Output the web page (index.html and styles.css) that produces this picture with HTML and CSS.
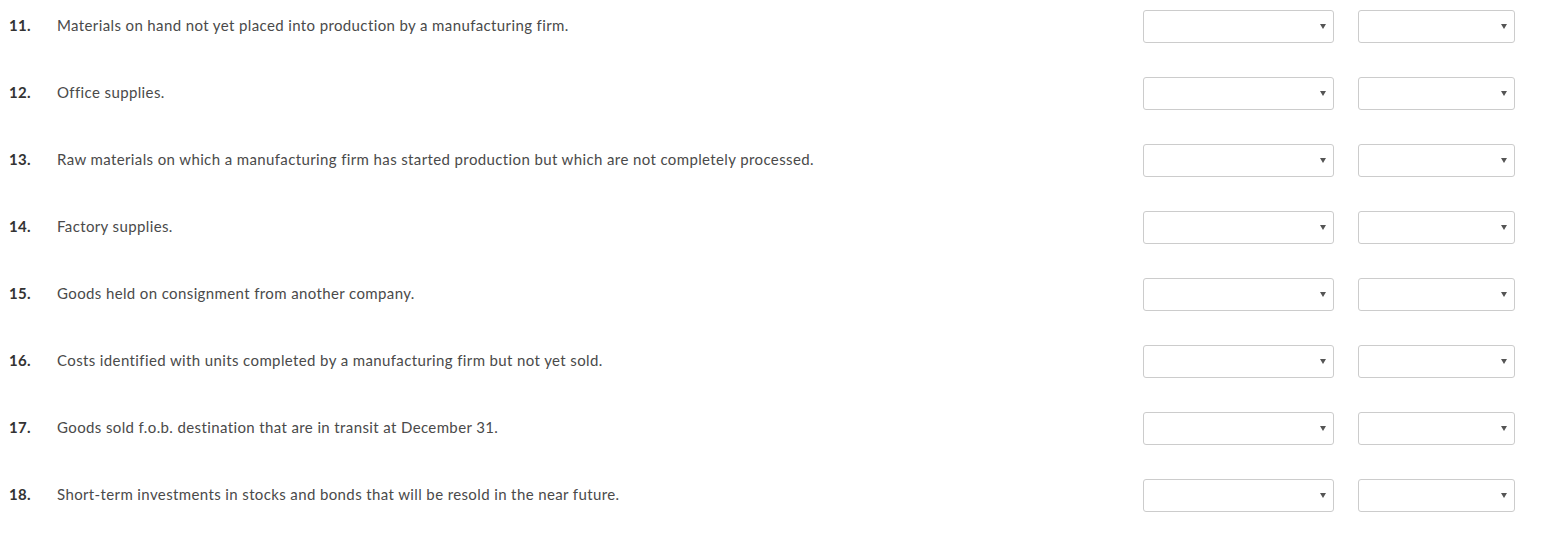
FILE: index.html
```html
<!DOCTYPE html>
<html>
<head>
<meta charset="utf-8">
<link rel="stylesheet" href="styles.css">
</head>
<body>
<div class="list">
  <div class="row"><span class="num">11.</span><span class="text">Materials on hand not yet placed into production by a manufacturing firm.</span><div class="sel wide"><i class="arrow"></i></div><div class="sel narrow"><i class="arrow"></i></div></div>
  <div class="row"><span class="num">12.</span><span class="text">Office supplies.</span><div class="sel wide"><i class="arrow"></i></div><div class="sel narrow"><i class="arrow"></i></div></div>
  <div class="row"><span class="num">13.</span><span class="text">Raw materials on which a manufacturing firm has started production but which are not completely processed.</span><div class="sel wide"><i class="arrow"></i></div><div class="sel narrow"><i class="arrow"></i></div></div>
  <div class="row"><span class="num">14.</span><span class="text">Factory supplies.</span><div class="sel wide"><i class="arrow"></i></div><div class="sel narrow"><i class="arrow"></i></div></div>
  <div class="row"><span class="num">15.</span><span class="text">Goods held on consignment from another company.</span><div class="sel wide"><i class="arrow"></i></div><div class="sel narrow"><i class="arrow"></i></div></div>
  <div class="row"><span class="num">16.</span><span class="text">Costs identified with units completed by a manufacturing firm but not yet sold.</span><div class="sel wide"><i class="arrow"></i></div><div class="sel narrow"><i class="arrow"></i></div></div>
  <div class="row"><span class="num">17.</span><span class="text">Goods sold f.o.b. destination that are in transit at December 31.</span><div class="sel wide"><i class="arrow"></i></div><div class="sel narrow"><i class="arrow"></i></div></div>
  <div class="row"><span class="num">18.</span><span class="text">Short-term investments in stocks and bonds that will be resold in the near future.</span><div class="sel wide"><i class="arrow"></i></div><div class="sel narrow"><i class="arrow"></i></div></div>
</div>
</body>
</html>
```
FILE: styles.css
```css
html, body {
  margin: 0;
  padding: 0;
  background: #fff;
}
body {
  font-family: Lato, "Open Sans", sans-serif;
  font-size: 15px;
  color: #4a4a4a;
}
.list {
  display: flex;
  flex-direction: column;
  gap: 35px;
  padding: 10px 35px 28px 9px;
}
.row {
  display: flex;
  align-items: center;
  height: 32px;
}
.num {
  width: 48px;
  flex: none;
  font-weight: bold;
  color: #333;
  letter-spacing: 0.3px;
  position: relative;
  top: -1px;
}
.text {
  flex: 1;
  letter-spacing: 0.38px;
  position: relative;
  top: -1px;
}
.sel {
  box-sizing: border-box;
  height: 33px;
  border: 1px solid #ccc;
  border-radius: 3px;
  background: #fff;
  display: flex;
  align-items: center;
  justify-content: flex-end;
  padding-right: 7px;
  flex: none;
}
.wide {
  width: 191px;
  margin-right: 24px;
}
.narrow {
  width: 157px;
}
.arrow {
  width: 0;
  height: 0;
  border-left: 3px solid transparent;
  border-right: 3px solid transparent;
  border-top: 5px solid #555;
}
```
